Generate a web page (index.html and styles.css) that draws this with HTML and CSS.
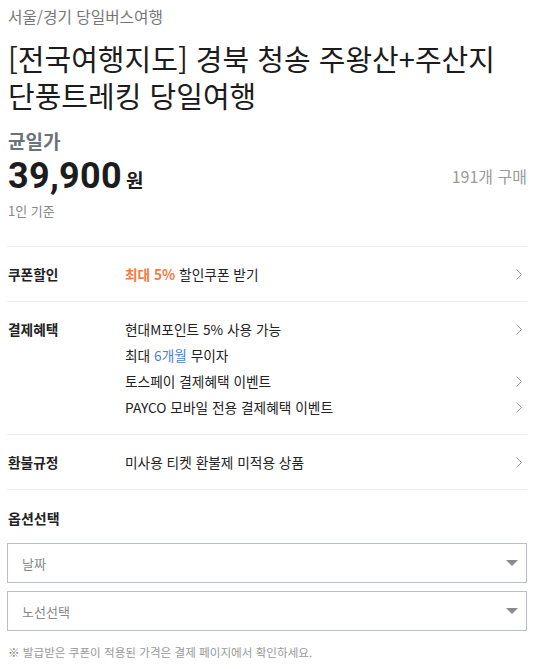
FILE: index.html
```html
<!DOCTYPE html>
<html lang="ko">
<head>
<meta charset="utf-8">
<link rel="stylesheet" href="styles.css">
</head>
<body>
<div class="page">
  <div class="crumb">서울/경기 당일버스여행</div>
  <h1 class="title"><span class="tline">[전국여행지도] 경북 청송 주왕산+주산지</span><span class="tline">단풍트레킹 당일여행</span></h1>
  <div class="price-label">균일가</div>
  <div class="price-row">
    <div class="price"><span class="num">39,900</span><span class="won">원</span></div>
    <div class="sold">191개 구매</div>
  </div>
  <div class="per">1인 기준</div>

  <div class="info">
    <div class="row">
      <div class="label">쿠폰할인</div>
      <div class="items">
        <div class="item"><span><b class="orange">최대 5%</b> 할인쿠폰 받기</span><svg class="chev" viewBox="0 0 6 11"><polyline points="0.5,0.5 5.5,5.5 0.5,10.5"/></svg></div>
      </div>
    </div>
    <div class="row">
      <div class="label">결제혜택</div>
      <div class="items">
        <div class="item"><span>현대M포인트 5% 사용 가능</span><svg class="chev" viewBox="0 0 6 11"><polyline points="0.5,0.5 5.5,5.5 0.5,10.5"/></svg></div>
        <div class="item"><span>최대 <span class="blue">6개월</span> 무이자</span></div>
        <div class="item"><span>토스페이 결제혜택 이벤트</span><svg class="chev" viewBox="0 0 6 11"><polyline points="0.5,0.5 5.5,5.5 0.5,10.5"/></svg></div>
        <div class="item"><span>PAYCO 모바일 전용 결제혜택 이벤트</span><svg class="chev" viewBox="0 0 6 11"><polyline points="0.5,0.5 5.5,5.5 0.5,10.5"/></svg></div>
      </div>
    </div>
    <div class="row">
      <div class="label">환불규정</div>
      <div class="items">
        <div class="item"><span>미사용 티켓 환불제 미적용 상품</span><svg class="chev" viewBox="0 0 6 11"><polyline points="0.5,0.5 5.5,5.5 0.5,10.5"/></svg></div>
      </div>
    </div>
  </div>

  <div class="opt-title">옵션선택</div>
  <div class="select"><span>날짜</span><span class="tri"></span></div>
  <div class="select"><span>노선선택</span><span class="tri"></span></div>
  <div class="note"><span class="mark">※</span> 발급받은 쿠폰이 적용된 가격은 결제 페이지에서 확인하세요.</div>
</div>
</body>
</html>
```

FILE: styles.css
```css
* { box-sizing: border-box; }
html, body { margin: 0; padding: 0; background: #fff; }
body {
  font-family: "Noto Sans CJK KR", "Noto Sans", sans-serif;
  color: #222;
}
.page { padding: 6px 7px 0 7px; width: 534px; }
.crumb { font-size: 15.7px; color: #777; line-height: 22px; padding-left: 1px; }
.title {
  margin: 12px 0 0 0;
  font-size: 29px;
  font-weight: 400;
  line-height: 37px;
  color: #1c1c1c;
  padding-left: 1px;
}
.tline { display: block; height: 37px; }
.price-label { margin-top: 14px; font-size: 19px; font-weight: 700; color: #6b717b; line-height: 26px; padding-left: 1px; }
.price-row { display: flex; justify-content: space-between; align-items: center; }
.price { display: flex; align-items: baseline; padding-left: 1px; }
.num { font-family: "Roboto", "Liberation Sans", sans-serif; font-size: 36px; font-weight: 700; line-height: 44px; color: #1c1c1c; letter-spacing: 0.3px; }
.won { font-size: 19px; font-weight: 700; margin-left: 4px; color: #1c1c1c; }
.sold { font-size: 16px; color: #9a9a9a; }
.per { margin-top: 3px; font-size: 13px; color: #888; line-height: 20px; padding-left: 1px; }

.info { margin-top: 25px; }
.row {
  display: flex;
  border-top: 1px solid #ececec;
  padding: 14px 0 14px 0;
}
.label { width: 118px; padding-left: 1px; font-size: 13.7px; font-weight: 700; color: #222; line-height: 26px; }
.items { flex: 1; }
.item {
  display: flex; justify-content: space-between; align-items: center;
  font-size: 13.7px; line-height: 26px; color: #222;
}
.orange { color: #f47a44; font-weight: 700; }
.blue { color: #4a7fd4; }
.chev {
  width: 6px; height: 11px;
  margin-right: 5px;
  fill: none; stroke: #a0a0a0; stroke-width: 1;
}
.opt-title {
  border-top: 1px solid #ececec;
  padding-top: 15px;
  padding-left: 1px;
  font-size: 14px; font-weight: 700; line-height: 26px; color: #222;
}
.select {
  margin-top: 12px;
  height: 40px;
  border: 1px solid #b9bec6;
  display: flex; justify-content: space-between; align-items: center;
  padding: 0 8px 0 14px;
  font-size: 13px; color: #888;
}
.select + .select { margin-top: 8px; }
.tri {
  width: 0; height: 0;
  border-left: 6px solid transparent; border-right: 6px solid transparent;
  border-top: 6px solid #8a8a8a;
}
.note { margin-top: 12px; font-size: 11.6px; color: #999; line-height: 18px; padding-left: 1px; }
.mark { color: #777; }
```
